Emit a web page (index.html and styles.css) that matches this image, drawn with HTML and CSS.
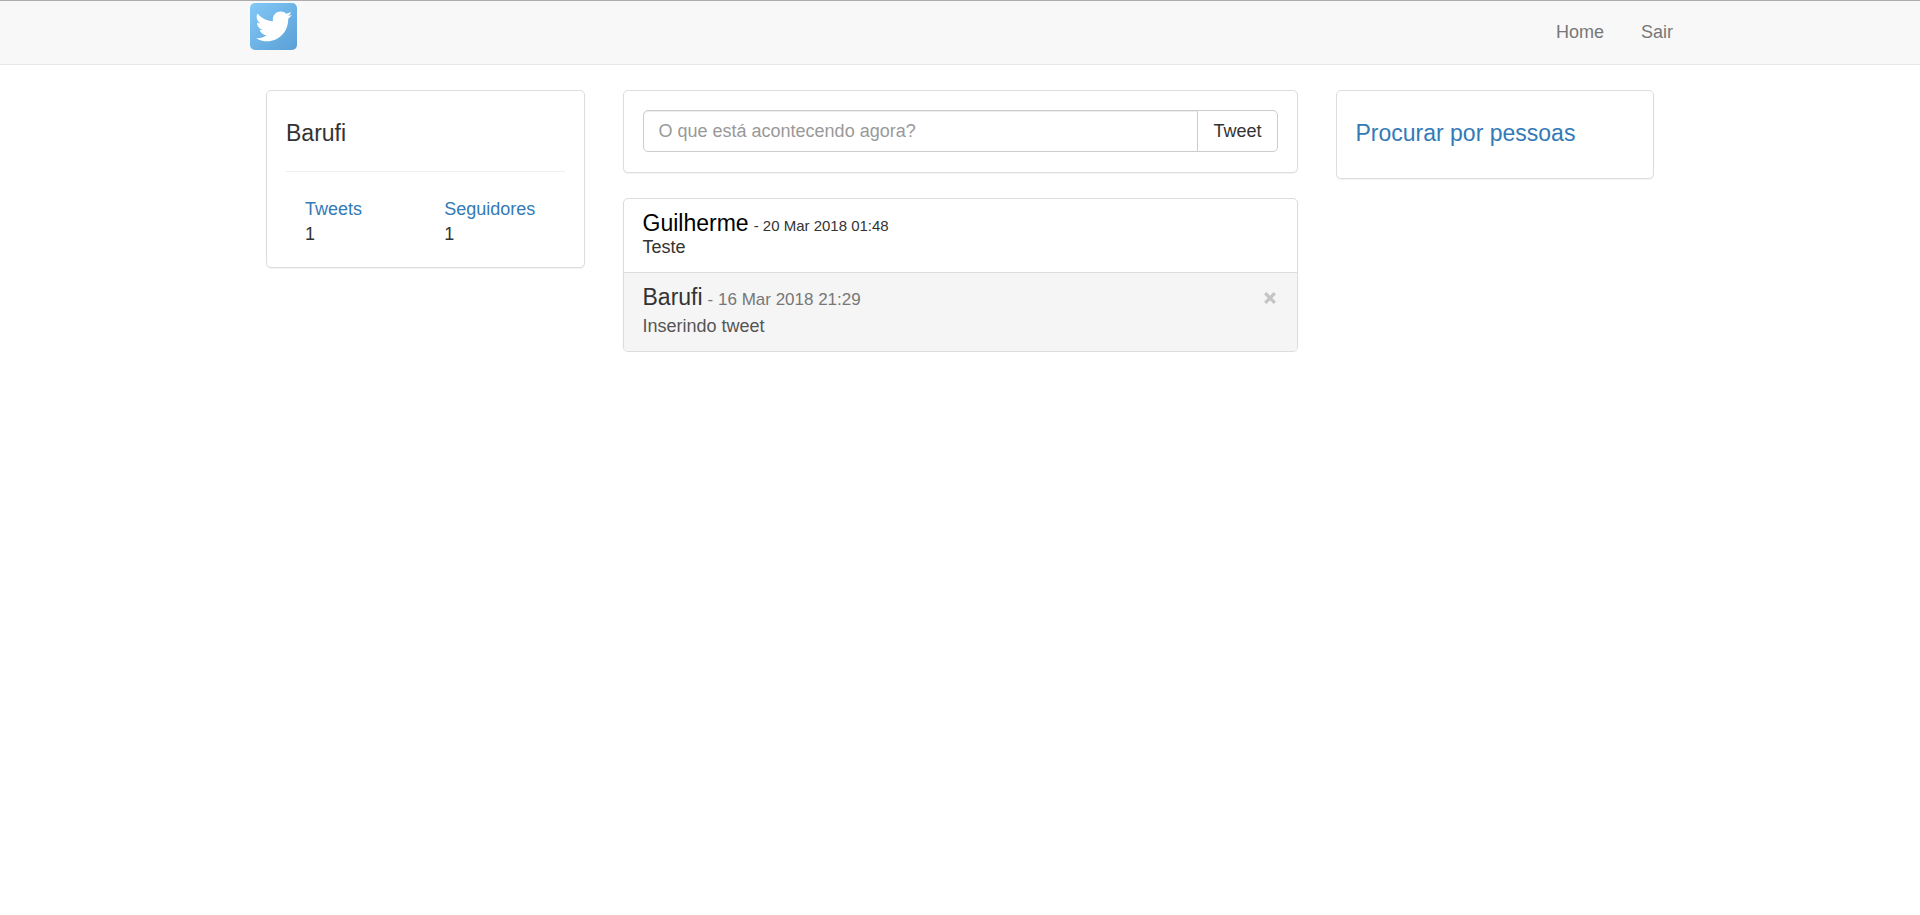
FILE: index.html
```html
<!DOCTYPE html>
<html lang="pt-BR">
<head>
<meta charset="utf-8">
<meta name="viewport" content="width=device-width, initial-scale=1">
<title>Twitter</title>
<link rel="stylesheet" href="styles.css">
</head>
<body>
<nav class="navbar">
  <div class="container navbar-inner">
    <a class="brand" href="#" aria-label="Twitter">
      <svg class="logo" viewBox="0 0 47 47" aria-hidden="true">
        <defs>
          <linearGradient id="sky" x1="0" y1="0" x2="1" y2="1">
            <stop offset="0" stop-color="#82c8f7"/>
            <stop offset="1" stop-color="#5a9fd6"/>
          </linearGradient>
        </defs>
        <rect width="47" height="47" rx="5" fill="url(#sky)"/>
        <path fill="#fff" d="M7.500 10.500C11 15 16.500 17.800 23 18.200C22 13 25.500 8.500 30.500 8.500C33 8.500 34.800 9.400 36.200 10.800C38 10.400 39.600 9.800 41 9C40.500 10.800 39.400 12 38 13C39.400 12.800 40.500 12.500 41.800 12C40.800 13.500 39.600 14.700 38.200 15.800C38.500 28 29.500 38.300 17 38.300C13 38.300 9 37.200 6 35.200C10 35.500 13.600 34.400 16.500 32.200C13 32 10.600 29.900 9.700 27C10.900 27.200 11.900 27.100 13 26.800C9.400 26 7 22.900 7 19.400C8 20 9 20.300 10.200 20.300C6.900 18 5.700 13.900 7.500 10.500Z"/>
      </svg>
    </a>
    <div class="nav-links">
      <a href="#">Home</a>
      <a href="#">Sair</a>
    </div>
  </div>
</nav>
<main class="container columns">
  <aside class="column">
    <section class="panel">
      <h4 class="title">Barufi</h4>
      <hr class="divider">
      <div class="stats">
        <div class="stat"><a href="#">Tweets</a><span>1</span></div>
        <div class="stat"><a href="#">Seguidores</a><span>1</span></div>
      </div>
    </section>
  </aside>
  <div class="column column-wide">
    <section class="panel">
      <form class="tweet-form">
        <input class="tweet-input" type="text" placeholder="O que está acontecendo agora?" aria-label="O que está acontecendo agora?">
        <button class="tweet-button" type="button">Tweet</button>
      </form>
    </section>
    <div class="tweets">
      <article class="tweet">
        <h4 class="tweet-head tweet-head-dark"><span>Guilherme</span> <small>- 20 Mar 2018 01:48</small></h4>
        <p class="tweet-text">Teste</p>
      </article>
      <article class="tweet tweet-own">
        <div>
          <h4 class="tweet-head"><span>Barufi</span> <small>- 16 Mar 2018 21:29</small></h4>
          <p class="tweet-text">Inserindo tweet</p>
        </div>
        <button class="close" type="button" aria-label="Excluir">
          <svg viewBox="0 0 12 12" aria-hidden="true"><path d="M1.200 1.200L10.800 10.800M10.800 1.200L1.200 10.800" stroke="#c4c4c4" stroke-width="3.300"/></svg>
        </button>
      </article>
    </div>
  </div>
  <aside class="column">
    <section class="panel">
      <h4 class="title"><a href="#">Procurar por pessoas</a></h4>
    </section>
  </aside>
</main>
</body>
</html>
```
FILE: styles.css
```css
* { box-sizing: border-box; }

body {
  margin: 0;
  background: #fff;
  color: #333;
  font: 18px/25px "Liberation Sans", Arial, sans-serif;
}

a { color: #337ab7; text-decoration: none; }
h4, p { margin: 0; font-weight: 400; }
button, input { font: inherit; }

.container {
  max-width: 1464px;
  margin: 0 auto;
  padding: 0 19px;
}

.navbar {
  margin-bottom: 25px;
  border-top: 1px solid #aeacad;
  border-bottom: 1px solid #e7e7e7;
  background: #f8f8f8;
}
.navbar-inner {
  display: flex;
  justify-content: space-between;
  align-items: flex-start;
}
.brand { padding: 2px 3px 0; }
.logo { display: block; width: 47px; height: 47px; }
.nav-links { display: flex; gap: 37px; padding: 19px 0; }
.nav-links a { color: #777; }

.columns { display: flex; align-items: flex-start; }
.column { flex: 0 0 25%; padding: 0 19px; }
.column-wide { flex-basis: 50%; }

.panel {
  margin-bottom: 25px;
  padding: 19px 19px 20px;
  border: 1px solid #ddd;
  border-radius: 5px;
  background: #fff;
  box-shadow: 0 1px 1px rgba(0, 0, 0, .05);
}
.title { margin: 11px 0 13px; font-size: 23px; line-height: 24px; }

.divider {
  margin: 26px 0 25px;
  border: 0;
  border-top: 1px solid #eee;
}
.stats { display: grid; grid-template-columns: 1fr 1fr; }
.stat { display: flex; flex-direction: column; padding: 0 19px; }

.tweet-form { display: flex; }
.tweet-input {
  flex: 1;
  min-width: 0;
  height: 42px;
  padding: 7px 15px;
  border: 1px solid #ccc;
  border-radius: 5px 0 0 5px;
  color: #555;
  box-shadow: inset 0 1px 1px rgba(0, 0, 0, .075);
}
.tweet-input::placeholder { color: #999; opacity: 1; }
.tweet-button {
  height: 42px;
  margin-left: -1px;
  padding: 0 15px;
  border: 1px solid #ccc;
  border-radius: 0 5px 5px 0;
  background: #fff;
  color: #333;
}

.tweets {
  overflow: hidden;
  border: 1px solid #ddd;
  border-radius: 5px;
  box-shadow: 0 1px 2px rgba(0, 0, 0, .05);
}
.tweet { padding: 12px 19px; }
.tweet-own {
  display: flex;
  justify-content: space-between;
  align-items: flex-start;
  border-top: 1px solid #ddd;
  background: #f5f5f5;
}
.tweet-head { font-size: 18px; line-height: 20px; }
.tweet-head span { font-size: 23px; line-height: 24px; }
.tweet-head small { color: #777; font-size: 17px; line-height: 1; }
.tweet-head-dark { color: #000; }
.tweet-head-dark small { color: #333; font-size: 15px; }
.tweet-own .tweet-text { margin-top: 5px; color: #555; }

.close {
  padding: 7px 2px;
  border: 0;
  background: none;
}
.close svg { display: block; width: 12px; height: 12px; }
```
